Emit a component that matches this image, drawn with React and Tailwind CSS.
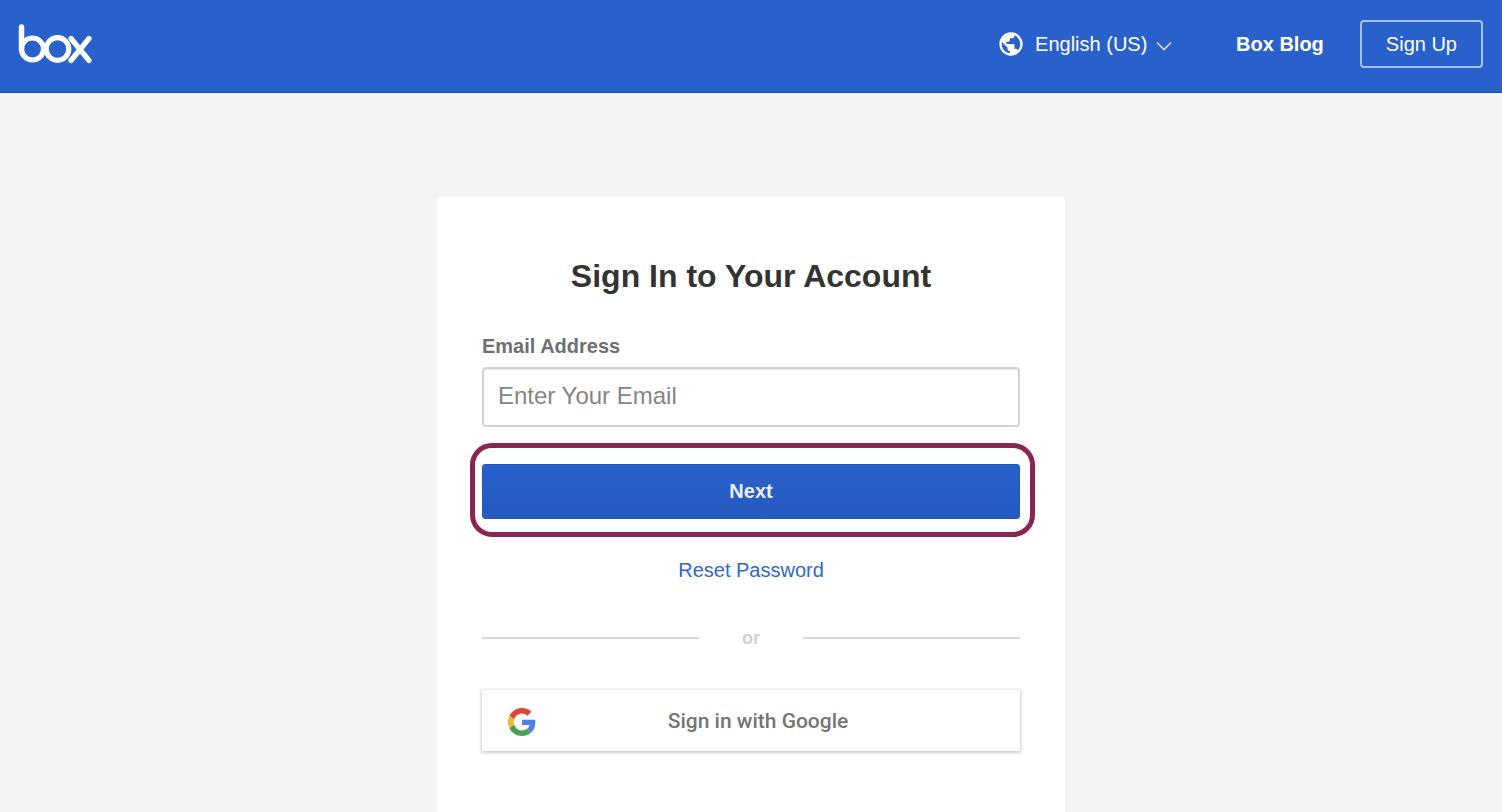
import React, { useState } from 'react';
import { MdPublic } from 'react-icons/md';

const BoxLogo = () => (
  <svg width="76" height="42" viewBox="0 0 76 42" fill="none" stroke="#fff" strokeLinecap="round" role="img" aria-label="Box">
    <path d="M4.5 4v22" strokeWidth="5.5" />
    <circle cx="15.5" cy="26" r="11" strokeWidth="5.2" />
    <circle cx="40.5" cy="26" r="11.3" strokeWidth="5.2" />
    <path d="M54 15.5l18 22M72 15.5l-18 22" strokeWidth="5.2" />
  </svg>
);

const GoogleLogo = () => (
  <svg width="28" height="28" viewBox="0 0 48 48" aria-hidden="true">
    <path fill="#db4437" d="M24 9.5c3.54 0 6.71 1.22 9.21 3.6l6.85-6.85C35.9 2.38 30.47 0 24 0 14.62 0 6.51 5.38 2.56 13.22l7.98 6.19C12.43 13.72 17.74 9.5 24 9.5z" />
    <path fill="#4c82ee" d="M46.98 24.55c0-1.57-.15-3.09-.38-4.55H24v9.02h12.94c-.58 2.96-2.26 5.48-4.78 7.18l7.73 6c4.51-4.18 7.09-10.36 7.09-17.65z" />
    <path fill="#f2b92f" d="M10.53 28.59c-.48-1.45-.76-2.99-.76-4.59s.27-3.14.76-4.59l-7.98-6.19C.92 16.46 0 20.12 0 24c0 3.88.92 7.54 2.56 10.78l7.97-6.19z" />
    <path fill="#4a9f54" d="M24 48c6.48 0 11.93-2.13 15.89-5.81l-7.73-6c-2.15 1.45-4.92 2.3-8.16 2.3-6.26 0-11.57-4.22-13.47-9.91l-7.98 6.19C6.51 42.62 14.62 48 24 48z" />
  </svg>
);

const Header = () => {
  const [language, setLanguage] = useState('en-US');

  return (
    <header className="flex h-[93px] items-center justify-between border-b border-[#1f53b0] bg-[#2860cc] pr-[19px] pb-1 pl-[17px] text-xl leading-6 text-white">
      <a href="#home">
        <BoxLogo />
      </a>
      <nav className="flex items-center">
        <label htmlFor="language" className="mr-2.5">
          <MdPublic className="size-7" role="img" aria-label="Language" />
        </label>
        <div className="mr-16 flex items-center">
          <select
            id="language"
            value={language}
            onChange={(e) => setLanguage(e.target.value)}
            className="-mr-4 appearance-none bg-transparent pr-6 outline-none"
          >
            <option value="en-US">English (US)</option>
          </select>
          <svg className="pointer-events-none mt-1 size-4" viewBox="0 0 16 16" fill="none" stroke="#dbe5f7" strokeWidth="1.6" aria-hidden="true">
            <path d="M1 4.5l7 7 7-7" />
          </svg>
        </div>
        <a href="#blog" className="mr-9 font-bold">Box Blog</a>
        <a href="#signup" className="flex h-12 items-center rounded border-2 border-[#a9c0ea] px-6">
          Sign Up
        </a>
      </nav>
    </header>
  );
};

const App = () => {
  const [email, setEmail] = useState('');

  const handleSubmit = (e) => {
    e.preventDefault();
  };

  return (
    <div className="flex min-h-screen flex-col bg-[#f4f4f4] font-['Liberation_Sans',Arial,sans-serif]">
      <Header />

      <main className="flex flex-1 justify-center pt-[104px]">
        <div className="w-full max-w-[628px] rounded-t bg-white px-[45px] pt-[59px] pb-14">
          <h1 className="text-center text-[32px] leading-10 font-bold text-[#333]">Sign In to Your Account</h1>

          <form onSubmit={handleSubmit} className="mt-9">
            <label htmlFor="email" className="block text-xl leading-7 font-bold text-[#6f6f73]">Email Address</label>
            <input
              id="email"
              type="email"
              placeholder="Enter Your Email"
              value={email}
              onChange={(e) => setEmail(e.target.value)}
              className="mt-[7px] block h-[60px] w-full rounded border-2 border-[#d3d3d3] bg-white px-3.5 pb-0.5 text-2xl text-[#333] shadow-[inset_0_1px_1px_#e8e8e8] outline-none placeholder:text-[#858585]"
            />

            <div className="relative mt-[37px]">
              <button
                type="submit"
                className="h-[55px] w-full rounded-[3px] border border-[#2157b5] bg-linear-to-b from-[#2860cc] to-[#255abf] pb-0.5 text-xl font-bold text-[#eaf0fb]"
              >
                Next
              </button>
              {/* Highlight ring around the button */}
              <span className="pointer-events-none absolute -top-[21px] -right-[15px] -bottom-[18px] -left-3 rounded-[22px] border-5 border-[#8a2452]" />
            </div>
          </form>

          <div className="mt-[37px] text-center text-xl leading-7">
            <a href="#reset" className="text-[#2f68cf]">Reset Password</a>
          </div>

          <div className="mt-10 flex items-center gap-[43px] text-lg leading-7 font-bold text-[#d0d0d0]">
            <span className="h-0.5 flex-1 bg-[#d6d6d6]" />
            or
            <span className="h-0.5 flex-1 bg-[#d6d6d6]" />
          </div>

          <button
            type="button"
            className="relative mt-[38px] flex h-[61px] w-full items-center justify-center bg-white pt-0.5 pl-3.5 font-[Roboto,sans-serif] text-[21px] font-medium text-[#757575] shadow-[0_1px_3px_1px_rgba(0,0,0,0.2)]"
          >
            <span className="absolute left-[26px]">
              <GoogleLogo />
            </span>
            Sign in with Google
          </button>
        </div>
      </main>
    </div>
  );
};

export default App;
